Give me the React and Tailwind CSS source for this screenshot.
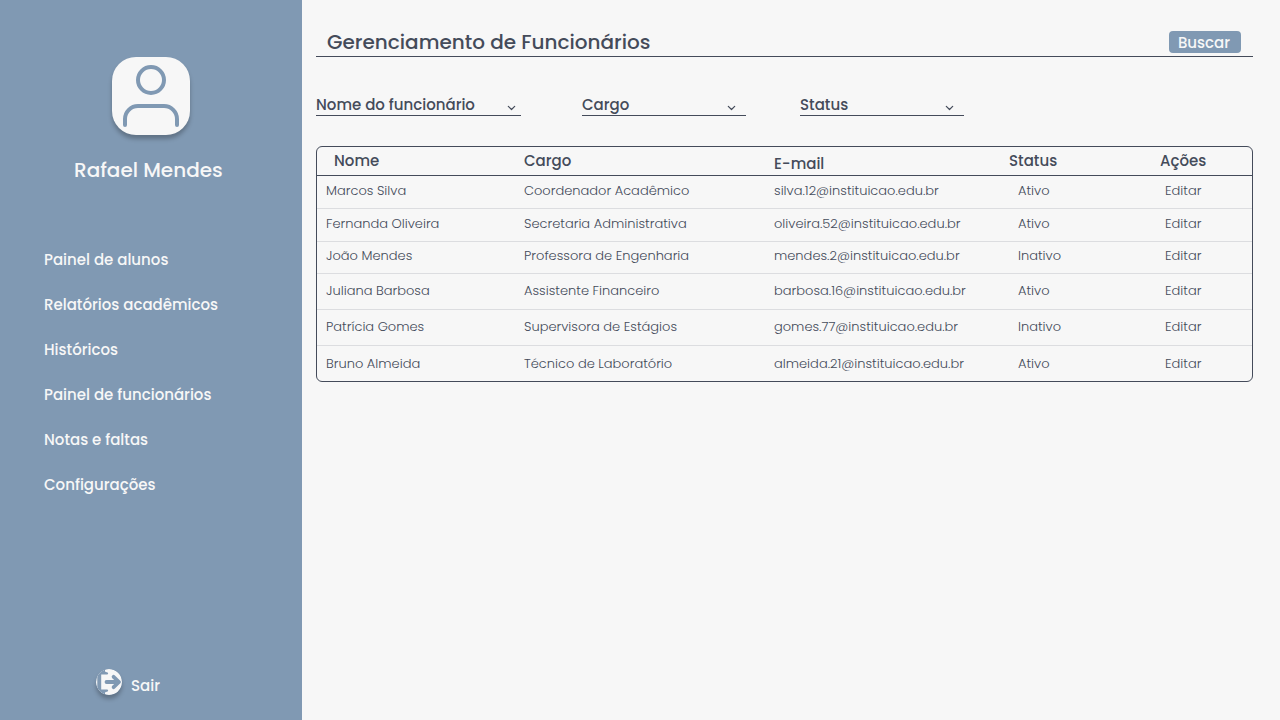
const navItems = [
  'Painel de alunos',
  'Relatórios acadêmicos',
  'Históricos',
  'Painel de funcionários',
  'Notas e faltas',
  'Configurações',
];

const filters = [
  { label: 'Nome do funcionário', box: 'w-[205px] mr-[61px]', arrow: 'right-[5px]' },
  { label: 'Cargo', box: 'w-[164px] mr-[54px]', arrow: 'right-[10px]' },
  { label: 'Status', box: 'w-[164px]', arrow: 'right-[10px]' },
];

const employees = [
  { name: 'Marcos Silva', role: 'Coordenador Acadêmico', email: 'silva.12@instituicao.edu.br', status: 'Ativo', row: 'h-[33px] *:pb-[2px]' },
  { name: 'Fernanda Oliveira', role: 'Secretaria Administrativa', email: 'oliveira.52@instituicao.edu.br', status: 'Ativo', row: 'h-[33px] *:pb-[2px]' },
  { name: 'João Mendes', role: 'Professora de Engenharia', email: 'mendes.2@instituicao.edu.br', status: 'Inativo', row: 'h-[32px] *:pb-[2px]' },
  { name: 'Juliana Barbosa', role: 'Assistente Financeiro', email: 'barbosa.16@instituicao.edu.br', status: 'Ativo', row: 'h-[36px]' },
  { name: 'Patrícia Gomes', role: 'Supervisora de Estágios', email: 'gomes.77@instituicao.edu.br', status: 'Inativo', row: 'h-[36px]' },
  { name: 'Bruno Almeida', role: 'Técnico de Laboratório', email: 'almeida.21@instituicao.edu.br', status: 'Ativo', row: 'h-[36px] *:pt-[2px]' },
];

function Avatar() {
  return (
    <div className="ml-[112px] size-[78px] rounded-[24px] bg-[#f7f7f7] shadow-[0_4px_4px_rgba(0,0,0,0.25)]">
      <svg viewBox="0 0 78 78" className="size-full" fill="none" stroke="#8099b3" strokeWidth="4" strokeLinecap="round" aria-hidden="true">
        <circle cx="39" cy="23" r="13" />
        <path d="M13 68V62a13 13 0 0 1 13-13H52a13 13 0 0 1 13 13V68" />
      </svg>
    </div>
  );
}

function ExitIcon() {
  return (
    <svg viewBox="0 0 26 26" className="size-[26px] rounded-full shadow-[0_4px_4px_rgba(0,0,0,0.25)]" aria-hidden="true">
      <defs>
        <clipPath id="exit-disc">
          <circle cx="13" cy="13" r="13" />
        </clipPath>
      </defs>
      <g clipPath="url(#exit-disc)">
        <rect width="26" height="26" fill="#f7f7f7" />
        <path
          d="M1.3 0H9V2.2Q9.4 3.2 11 3.2Q12.2 3.4 12.2 4.5Q12 5.4 11 5.4H5.2V20.6H11Q12 20.6 12.2 21.5Q12.2 22.6 11 22.8Q9.4 22.8 9 23.8V26H1.3Z"
          fill="#8099b3"
        />
        <path d="M10.5 13H22.5M17.6 7.8L23 13L17.6 18.2" fill="none" stroke="#8099b3" strokeWidth="3.8" strokeLinecap="round" strokeLinejoin="round" />
      </g>
    </svg>
  );
}

function Sidebar() {
  return (
    <aside className="flex w-[302px] shrink-0 flex-col bg-[#8099b3] pt-[57px] pb-[22px] text-[#f7f7f7]">
      <Avatar />
      <p className="mt-5 pl-[74px] text-[20px] leading-[30px] font-medium">Rafael Mendes</p>
      <nav className="mt-[63px] flex flex-col gap-[21px] pl-[44px]">
        {navItems.map((item) => (
          <a key={item} href="#" className="text-[15px] leading-6 font-medium">
            {item}
          </a>
        ))}
      </nav>
      <a href="#" className="mt-auto flex items-start gap-[9px] pl-[96px] font-medium">
        <ExitIcon />
        <span className="pt-[5px] text-[15px] leading-6">Sair</span>
      </a>
    </aside>
  );
}

function Filter({ label, box, arrow }) {
  return (
    <div className={`relative border-b border-[#444b5a] ${box}`}>
      <select aria-label={label} className="block h-[22px] w-full appearance-none bg-transparent pt-[2px] text-[15px] leading-5 font-medium">
        <option>{label}</option>
      </select>
      <svg viewBox="0 0 9 6" className={`pointer-events-none absolute bottom-[4px] h-[6px] w-[9px] ${arrow}`} fill="none" stroke="#444b5a" strokeWidth="1.2" strokeLinecap="round" strokeLinejoin="round" aria-hidden="true">
        <path d="M1.3 1.3L4.5 4.5L7.7 1.3" />
      </svg>
    </div>
  );
}

function EmployeeTable() {
  return (
    <div className="mt-[30px] rounded-[6px] border border-[#444b5a]">
      <table className="w-full table-fixed border-collapse text-left">
        <colgroup>
          <col className="w-[198px]" />
          <col className="w-[250px]" />
          <col className="w-[235px]" />
          <col className="w-[151px]" />
          <col className="w-[101px]" />
        </colgroup>
        <thead className="text-[15px] leading-5">
          <tr className="h-[28px] border-b border-[#444b5a]">
            <th className="pl-[17px] font-medium">Nome</th>
            <th className="pl-[9px] font-medium">Cargo</th>
            <th className="pt-[6px] pl-[9px] font-medium">E-mail</th>
            <th className="pl-[9px] font-medium">Status</th>
            <th className="pl-[9px] font-medium">Ações</th>
          </tr>
        </thead>
        <tbody className="text-[13px] leading-5 font-light">
          {employees.map((e) => (
            <tr key={e.email} className={`border-b border-[#dcdde0] last:border-b-0 ${e.row}`}>
              <td className="pl-[9px]">{e.name}</td>
              <td className="pl-[9px]">{e.role}</td>
              <td className="pl-[9px]">{e.email}</td>
              <td className="pl-[18px]">{e.status}</td>
              <td className="pl-[14px]">
                <a href="#">Editar</a>
              </td>
            </tr>
          ))}
        </tbody>
      </table>
    </div>
  );
}

export default function App() {
  return (
    <div className="flex min-h-screen bg-[#f7f7f7] font-['Poppins','Inter',sans-serif] text-[#444b5a]">
      <Sidebar />
      <main className="min-w-0 flex-1 pt-[27px] pr-[27px] pl-[14px]">
        <header className="flex items-center justify-between border-b border-[#444b5a] pr-3 pl-[11px]">
          <h1 className="pt-px text-[20px] leading-7 font-medium">Gerenciamento de Funcionários</h1>
          <button type="button" className="h-[22px] w-[72px] rounded-[4px] bg-[#8099b3] pt-[2px] pr-[2px] text-[15px] leading-5 font-medium text-[#f7f7f7]">
            Buscar
          </button>
        </header>
        <form className="mt-[36px] flex">
          {filters.map((f) => (
            <Filter key={f.label} {...f} />
          ))}
        </form>
        <EmployeeTable />
      </main>
    </div>
  );
}
